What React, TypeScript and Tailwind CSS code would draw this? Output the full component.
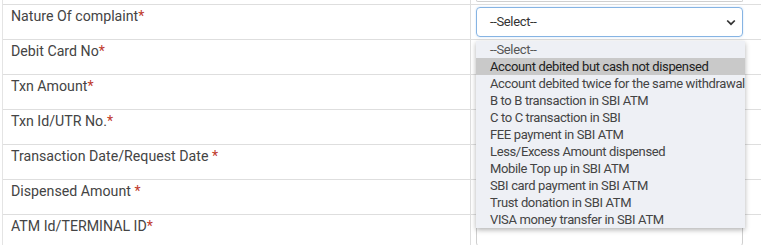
import React from "react";

const rows: { label: string; star: string; kind: "select" | "input" }[] = [
  { label: "Nature Of complaint", star: "*", kind: "select" },
  { label: "Debit Card No", star: "*", kind: "input" },
  { label: "Txn Amount", star: "*", kind: "input" },
  { label: "Txn Id/UTR No.", star: "*", kind: "input" },
  { label: "Transaction Date/Request Date ", star: "*", kind: "input" },
  { label: "Dispensed Amount ", star: "*", kind: "input" },
  { label: "ATM Id/TERMINAL ID", star: "*", kind: "input" },
];

const options = [
  "--Select--",
  "Account debited but cash not dispensed",
  "Account debited twice for the same withdrawal",
  "B to B transaction in SBI ATM",
  "C to C transaction in SBI",
  "FEE payment in SBI ATM",
  "Less/Excess Amount dispensed",
  "Mobile Top up in SBI ATM",
  "SBI card payment in SBI ATM",
  "Trust donation in SBI ATM",
  "VISA money transfer in SBI ATM",
];

export default function App() {
  return (
    <div
      className="relative w-[761px] h-[245px] overflow-hidden bg-white"
      style={{ fontFamily: "Roboto, 'Liberation Sans', sans-serif" }}
    >
      <div className="ml-[2px] border-l border-[#e4e4e4]">
        <div className="flex h-[4px]">
          <div className="w-[468px] border-r border-[#dedede]" />
          <div className="flex-1 pl-[5px]">
            <div className="w-[267px] h-[2px] border-x border-b border-[#cfcfcf] rounded-b-[4px]" />
          </div>
        </div>
        {rows.map((r, i) => (
          <div key={i} className="flex h-[35px] border-t border-[#dedede]">
            <div className="w-[468px] border-r border-[#dedede] pl-[8px] pt-[1px] text-[14.2px] leading-5 text-[#444]">
              {r.label}
              <span className="text-[#c0392b]">{r.star}</span>
            </div>
            <div className="flex-1 pl-[5px] pt-[2px]">
              {r.kind === "select" ? (
                <div className="w-[267px] h-[30px] border border-[#86b4e3] rounded-[4px] flex items-center justify-between pl-[13px] pr-[5px] text-[13px] tracking-[-0.36px] text-[#333] shadow-[0_0_2px_rgba(100,160,230,0.35)]">
                  <span>--Select--</span>
                  <svg width="10" height="7" viewBox="0 0 10 7" className="mr-[1px]">
                    <path d="M1.2 1.5 L5 5.2 L8.8 1.5" fill="none" stroke="#333" strokeWidth="1.7" />
                  </svg>
                </div>
              ) : (
                <div className="w-[267px] h-[30px] border border-[#cfcfcf] rounded-[4px]" />
              )}
            </div>
          </div>
        ))}
      </div>
      <div className="absolute left-[476px] top-[41px] w-[269px] bg-[#eef0f5] shadow-[0_2px_5px_rgba(0,0,0,0.3)]">
        {options.map((o, i) => (
          <div
            key={i}
            className={`h-[17px] leading-[17px] pl-[14px] text-[13px] tracking-[-0.36px] whitespace-nowrap ${
              i === 1 ? "bg-[#c9c9c9] text-[#222]" : i === 0 ? "text-[#555]" : "text-[#444]"
            }`}
          >
            {o}
          </div>
        ))}
      </div>
    </div>
  );
}
